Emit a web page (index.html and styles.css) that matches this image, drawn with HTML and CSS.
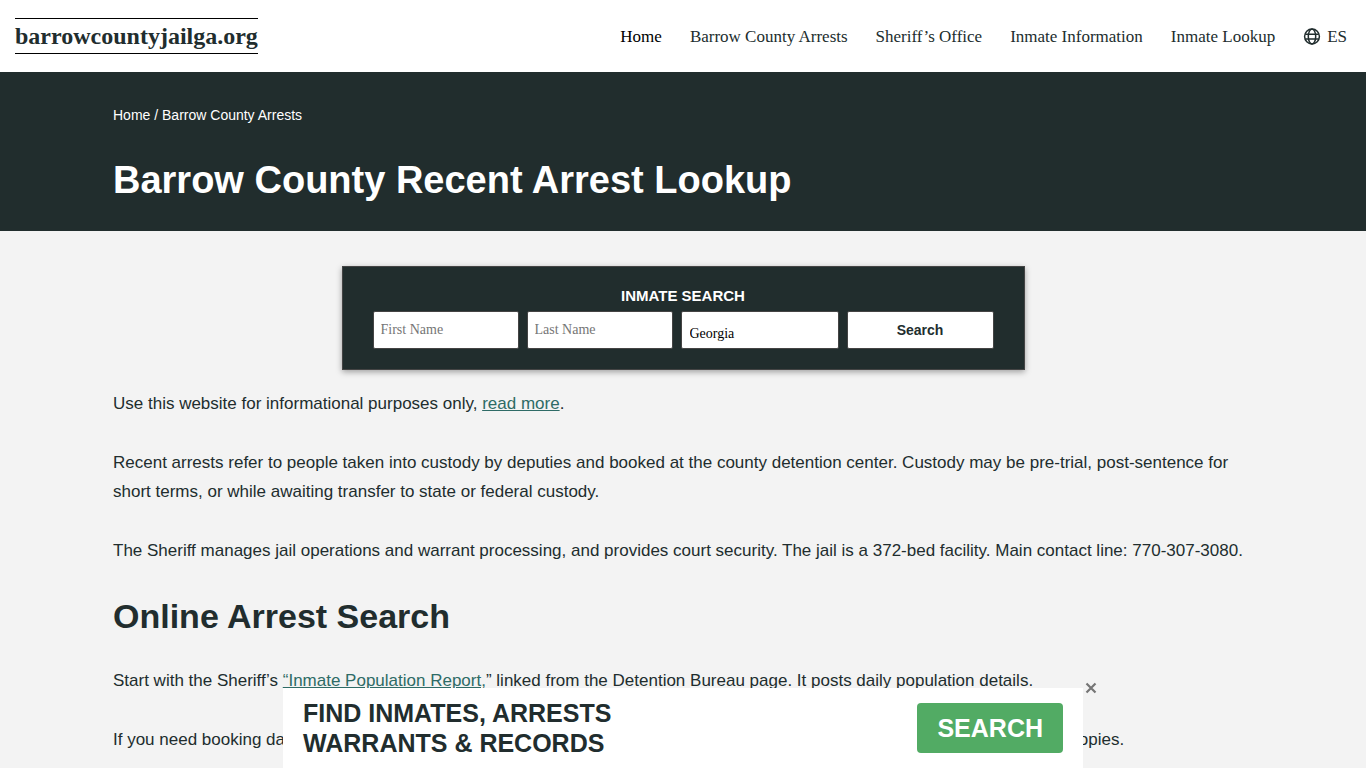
FILE: index.html
```html
<!DOCTYPE html>
<html lang="en">

<head>
    <meta charset="UTF-8">
    <meta name="viewport" content="width=device-width, initial-scale=1.0">
    <title>Barrow County Recent Arrest Lookup</title>
    <link rel="stylesheet" href="styles.css">
</head>

<body>
    <!-- Header -->
    <header class="site-header">
        <a href="#" class="logo">barrowcountyjailga.org</a>
        <nav class="main-nav">
            <a href="#" class="active">Home</a>
            <a href="#">Barrow County Arrests</a>
            <a href="#">Sheriff’s Office</a>
            <a href="#">Inmate Information</a>
            <a href="#">Inmate Lookup</a>
            <a href="#" class="lang">
                <svg width="18" height="18" viewBox="0 0 18 18" fill="none" stroke="currentColor" stroke-width="1.5" aria-hidden="true">
                    <circle cx="9" cy="9.5" r="7.4"/>
                    <ellipse cx="9" cy="9.5" rx="3.7" ry="7.4"/>
                    <path d="M2.2 7.2h13.6M2.2 12h13.6"/>
                </svg>
                <span>ES</span>
            </a>
        </nav>
    </header>

    <!-- Page title -->
    <div class="page-title">
        <div class="container">
            <div class="breadcrumb"><a href="#">Home</a> / <span>Barrow County Arrests</span></div>
            <h1>Barrow County Recent Arrest Lookup</h1>
        </div>
    </div>

    <main class="container content">
        <!-- Search box -->
        <form class="search-box">
            <div class="search-title">INMATE SEARCH</div>
            <div class="search-row">
                <input type="text" class="field" aria-label="First Name" placeholder="First Name">
                <input type="text" class="field" aria-label="Last Name" placeholder="Last Name">
                <select class="field state" aria-label="State">
                    <option>Georgia</option>
                </select>
                <button type="submit" class="search-btn">Search</button>
            </div>
        </form>

        <p>Use this website for informational purposes only, <a href="#">read more</a>.</p>
        <p>Recent arrests refer to people taken into custody by deputies and booked at the county detention center. Custody may be pre-trial, post-sentence for short terms, or while awaiting transfer to state or federal custody.</p>
        <p>The Sheriff manages jail operations and warrant processing, and provides court security. The jail is a 372-bed facility. Main contact line: 770-307-3080.</p>

        <h2>Online Arrest Search</h2>
        <p>Start with the Sheriff’s <a href="#">“Inmate Population Report,</a>” linked from the Detention Bureau page. It posts daily population details.</p>
        <p>If you need booking data that is not shown online, contact the Sheriff’s Office records unit and then ask to request official paper copies.</p>
    </main>

    <!-- Bottom banner -->
    <div class="banner">
        <div class="banner-text">FIND INMATES, ARRESTS<br>WARRANTS &amp; RECORDS</div>
        <a href="#" class="banner-btn">SEARCH</a>
        <button type="button" class="banner-close" aria-label="Close">
            <svg width="12" height="12" viewBox="0 0 12 12" fill="none" stroke="currentColor" stroke-width="2.2" aria-hidden="true">
                <path d="M1.5 1.5l9 9M10.5 1.5l-9 9"/>
            </svg>
        </button>
    </div>
</body>

</html>
```

FILE: styles.css
```css
* {
    box-sizing: border-box;
}

body {
    margin: 0;
    font-family: "Liberation Sans", Arial, sans-serif;
    font-size: 17px;
    line-height: 29px;
    color: #212d2e;
    background-color: #f3f3f3;
}

.container {
    max-width: 1140px;
    margin: 0 auto;
}

/* Header */
.site-header {
    display: flex;
    justify-content: space-between;
    align-items: center;
    height: 72px;
    padding: 0 19px 0 15px;
    background-color: #fff;
    font-family: "Liberation Serif", "Times New Roman", serif;
}

.logo {
    border-top: 1px solid #000;
    border-bottom: 1px solid #000;
    font-size: 24px;
    font-weight: bold;
    line-height: 34px;
    color: #212d2e;
    text-decoration: none;
}

.main-nav {
    display: flex;
    align-items: center;
    gap: 28px;
}

.main-nav a {
    color: #212d2e;
    text-decoration: none;
}

.main-nav .active {
    color: #000;
}

.main-nav .lang {
    display: flex;
    align-items: center;
    gap: 6px;
}

/* Page title */
.page-title {
    padding: 32px 0 27px;
    background-color: #212d2d;
    color: #fff;
}

.breadcrumb {
    font-size: 14px;
    line-height: 22px;
}

.breadcrumb a {
    color: #fff;
    text-decoration: none;
}

.page-title h1 {
    margin: 30px 0 0;
    font-size: 38px;
    line-height: 48px;
}

/* Search box */
.content {
    padding-top: 35px;
}

.search-box {
    max-width: 683px;
    margin: 0 auto 19px;
    padding: 19px 30px 20px;
    background-color: #212d2d;
    border: 1px solid #444;
    box-shadow: 0 2px 6px rgba(0, 0, 0, 0.35);
}

.search-title {
    margin-bottom: 5px;
    font-size: 15px;
    font-weight: bold;
    line-height: 20px;
    text-align: center;
    color: #fff;
}

.search-row {
    display: grid;
    grid-template-columns: 146fr 146fr 158fr 147fr;
    gap: 8px;
}

.field {
    width: 100%;
    min-width: 0;
    height: 38px;
    padding: 0 7px;
    border: 1px solid #444;
    border-radius: 2px;
    background-color: #fff;
    font-family: "Liberation Serif", "Times New Roman", serif;
    font-size: 14px;
    color: #000;
}

.field::placeholder {
    color: #757575;
}

.state {
    padding: 7px 8px 0;
    appearance: none;
}

.search-btn {
    height: 38px;
    border: 1px solid #444;
    border-radius: 2px;
    background-color: #fff;
    font-family: inherit;
    font-size: 14px;
    font-weight: bold;
    color: #212d2e;
    cursor: pointer;
}

/* Text */
.content p {
    margin: 0 0 30px;
}

.content p a {
    color: #2e6b66;
}

.content h2 {
    margin: 0 0 29px;
    font-size: 34px;
    line-height: 42px;
}

/* Bottom banner */
.banner {
    position: fixed;
    bottom: 0;
    left: 50%;
    display: flex;
    justify-content: space-between;
    align-items: center;
    width: 800px;
    max-width: 100%;
    height: 80px;
    padding: 0 20px;
    background-color: #fff;
    transform: translateX(-50%);
}

.banner-text {
    font-size: 25px;
    font-weight: bold;
    line-height: 30px;
}

.banner-btn {
    padding: 0 20px;
    border-radius: 4px;
    background-color: #52ab64;
    font-size: 25px;
    font-weight: bold;
    line-height: 50px;
    color: #fff;
    text-decoration: none;
}

.banner-close {
    position: absolute;
    top: -8px;
    left: 100%;
    display: flex;
    align-items: center;
    justify-content: center;
    width: 16px;
    height: 16px;
    padding: 0;
    border: none;
    background: none;
    color: #757575;
    cursor: pointer;
}
```
